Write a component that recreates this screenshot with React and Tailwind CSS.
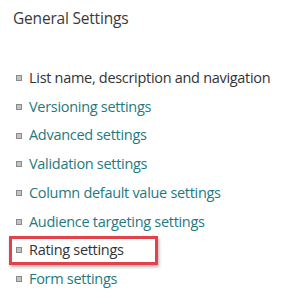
const items = [
  { label: 'List name, description and navigation', dark: true },
  { label: 'Versioning settings' },
  { label: 'Advanced settings' },
  { label: 'Validation settings' },
  { label: 'Column default value settings' },
  { label: 'Audience targeting settings' },
  { label: 'Rating settings', dark: true, boxed: true },
  { label: 'Form settings' },
];

export default function App() {
  return (
    <div
      className="w-[282px] h-[299px] bg-white overflow-hidden pl-[13px] pt-[7px]"
      style={{ fontFamily: '"Open Sans", "Noto Sans", sans-serif' }}
    >
      <h2 className="text-[15.5px] leading-[22px] tracking-[-0.2px] text-[#3a3a3a]">General Settings</h2>
      <ul className="mt-[35px] flex flex-col">
        {items.map((item) => (
          <li key={item.label} className="relative h-[28.7px] flex items-center">
            {item.boxed && (
              <span className="absolute left-[-4px] top-0 w-[149px] h-[29px] border-[3px] border-[#e2434b] shadow-[1px_2px_3px_rgba(0,0,0,0.3)]" />
            )}
            <span className="ml-[3px] w-[6px] h-[6px] bg-[#c4c4c4] border border-[#8a8a8a] shrink-0" />
            <span
              className={`ml-[7px] text-[14.5px] leading-none tracking-[-0.3px] ${
                item.dark ? 'text-[#333]' : 'text-[#1f7a80]'
              }`}
            >
              {item.label}
            </span>
          </li>
        ))}
      </ul>
    </div>
  );
}
